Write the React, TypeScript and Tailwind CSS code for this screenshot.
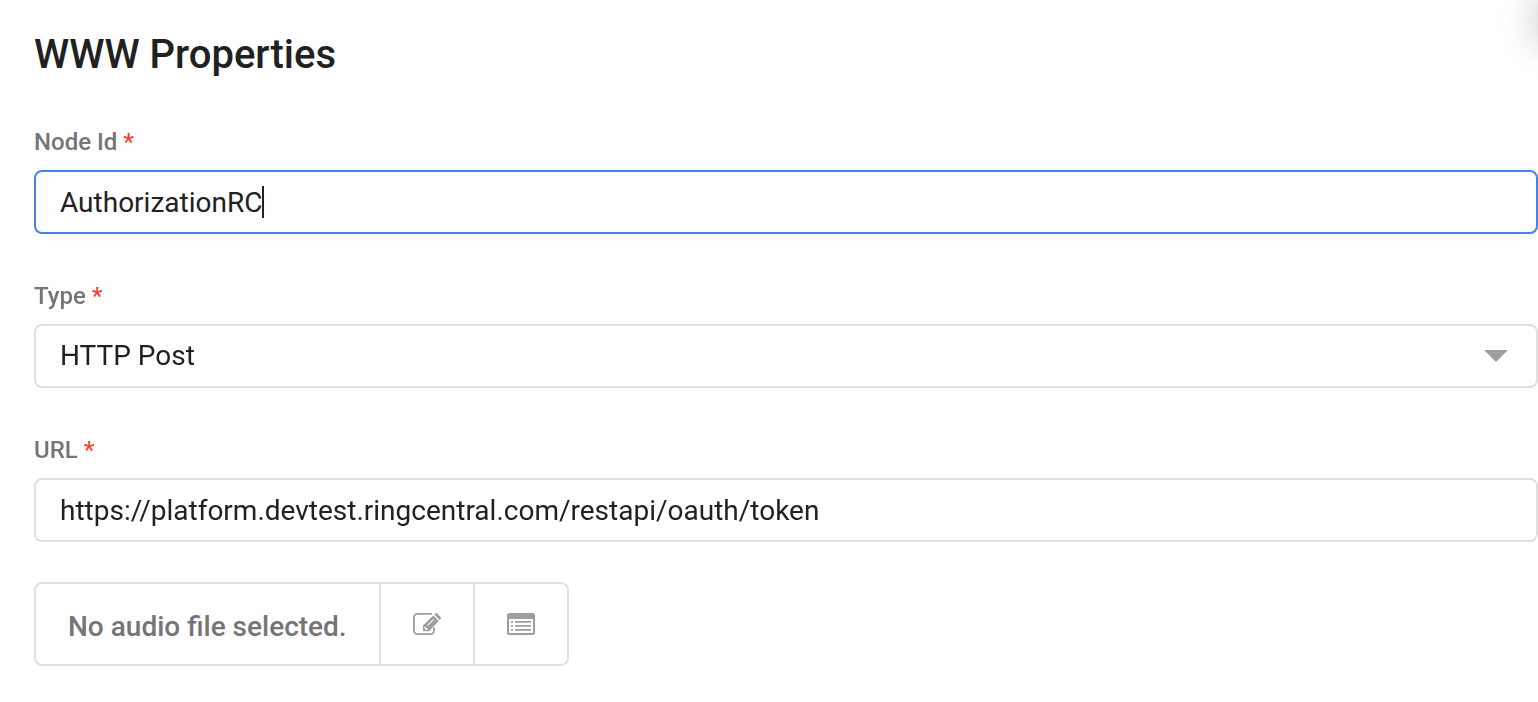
import { useState } from "react";
import type { ReactNode } from "react";

const requestTypes = ["HTTP Get", "HTTP Post", "HTTP Put", "HTTP Delete"];

const controlClass =
  "block h-16 w-full rounded-lg border-2 border-[#e0e0e0] bg-white px-6 text-[28px] text-[#212121] outline-none focus:border-[#4583e6]";

function EditIcon() {
  return (
    <svg viewBox="0 0 28 22" className="h-[22px] w-7" fill="none" aria-hidden="true">
      <path
        d="M19 .9H4.500A3.600 3.600 0 0 0 .9 4.500v13a3.600 3.600 0 0 0 3.600 3.600h13a3.600 3.600 0 0 0 3.600-3.600V14.300"
        stroke="currentColor"
        strokeWidth="1.8"
      />
      <path
        fill="currentColor"
        fillRule="evenodd"
        d="M10 18.300V12.400L20.200 2.400L25.800 8L16 18.300ZM11.400 14.300V15.400H12.600V17H14L14.800 16.200L12.200 13.500ZM14.300 12.100L15 12.800L21 6.700L20.300 6Z"
      />
      <path
        fill="currentColor"
        d="M21.200 1.600L22.300.5Q23.200-.3 24.100.5L27.600 4Q28.300 4.800 27.600 5.700L26.600 6.900Z"
      />
    </svg>
  );
}

function ListIcon() {
  return (
    <svg viewBox="0 0 28 22" className="h-[22px] w-7" fill="currentColor" aria-hidden="true">
      <path
        fillRule="evenodd"
        d="M2.500 0h23A2.500 2.500 0 0 1 28 2.500v17a2.500 2.500 0 0 1-2.500 2.500h-23A2.500 2.500 0 0 1 0 19.500v-17A2.500 2.500 0 0 1 2.500 0ZM2 6v13.200q0 .8.800.8h22.400q.8 0 .8-.8V6Z"
      />
      <path d="M4 8h2v1.800H4zM8 8h16v1.800H8zM4 12h2v1.800H4zM8 12h16v1.800H8zM4 16h2v1.800H4zM8 16h16v1.800H8z" />
    </svg>
  );
}

function Field({ id, label, children }: { id: string; label: string; children: ReactNode }) {
  return (
    <div>
      <label htmlFor={id} className="mb-3 block text-2xl font-medium text-[#757575]">
        {label} <span className="text-[#f44336]">*</span>
      </label>
      {children}
    </div>
  );
}

export default function App() {
  const [nodeId, setNodeId] = useState("AuthorizationRC");
  const [type, setType] = useState("HTTP Post");
  const [url, setUrl] = useState("https://platform.devtest.ringcentral.com/restapi/oauth/token");

  return (
    <main className="relative overflow-hidden bg-white pt-7 pb-9 pl-[34px] font-['Roboto',sans-serif]">
      {/* Shadow of the neighbouring panel */}
      <div
        className="pointer-events-none absolute top-0 left-full h-10 w-20 shadow-[0_0_40px_rgba(0,0,0,0.28)]"
        aria-hidden="true"
      />

      <h1 className="mb-11 text-[40px] leading-[54px] font-medium text-[#212121]">WWW Properties</h1>

      <form className="flex flex-col gap-[46px]" onSubmit={(e) => e.preventDefault()}>
        <Field id="node-id" label="Node Id">
          {/* The input grows with its text so the thick caret follows it */}
          <div className="flex h-16 items-center rounded-lg border-2 border-[#e0e0e0] bg-white px-6 focus-within:border-[#4583e6]">
            <input
              id="node-id"
              type="text"
              autoFocus
              required
              value={nodeId}
              onChange={(e) => setNodeId(e.target.value)}
              className="peer field-sizing-content h-full max-w-full bg-transparent text-[28px] text-[#212121] caret-transparent outline-none"
            />
            <span className="hidden h-8 w-0.5 bg-[#212121] peer-focus:block" aria-hidden="true" />
          </div>
        </Field>

        <Field id="type" label="Type">
          <div className="relative">
            <select
              id="type"
              required
              value={type}
              onChange={(e) => setType(e.target.value)}
              className={`${controlClass} appearance-none`}
            >
              {requestTypes.map((item) => (
                <option key={item}>{item}</option>
              ))}
            </select>
            <svg
              viewBox="0 0 24 12"
              className="pointer-events-none absolute top-[26px] right-[30px] h-3 w-6 text-[#9e9e9e]"
              fill="currentColor"
              aria-hidden="true"
            >
              <path d="M0 0h24L12 12z" />
            </svg>
          </div>
        </Field>

        <Field id="url" label="URL">
          <input
            id="url"
            type="text"
            required
            value={url}
            onChange={(e) => setUrl(e.target.value)}
            className={controlClass}
          />
        </Field>
      </form>

      <div className="mt-10 inline-flex h-[84px] rounded-lg border-2 border-[#e0e0e0] text-[#9e9e9e]">
        <span className="flex items-center px-8 pt-1.5 text-[28px] font-medium text-[#757575]">
          No audio file selected.
        </span>
        <button
          type="button"
          aria-label="Edit audio file"
          className="flex w-[94px] items-center justify-center border-l-2 border-[#e0e0e0]"
        >
          <EditIcon />
        </button>
        <button
          type="button"
          aria-label="Choose audio file"
          className="flex w-[94px] items-center justify-center border-l-2 border-[#e0e0e0]"
        >
          <ListIcon />
        </button>
      </div>
    </main>
  );
}
